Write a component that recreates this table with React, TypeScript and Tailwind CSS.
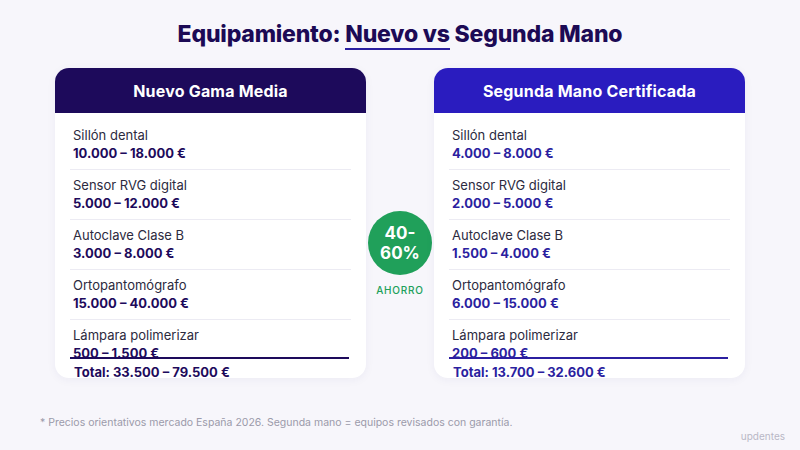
import React from 'react';

type Item = { name: string; price: string };

const nuevo: Item[] = [
  { name: 'Sillón dental', price: '10.000 – 18.000 €' },
  { name: 'Sensor RVG digital', price: '5.000 – 12.000 €' },
  { name: 'Autoclave Clase B', price: '3.000 – 8.000 €' },
  { name: 'Ortopantomógrafo', price: '15.000 – 40.000 €' },
  { name: 'Lámpara polimerizar', price: '500 – 1.500 €' },
];

const segunda: Item[] = [
  { name: 'Sillón dental', price: '4.000 – 8.000 €' },
  { name: 'Sensor RVG digital', price: '2.000 – 5.000 €' },
  { name: 'Autoclave Clase B', price: '1.500 – 4.000 €' },
  { name: 'Ortopantomógrafo', price: '6.000 – 15.000 €' },
  { name: 'Lámpara polimerizar', price: '200 – 600 €' },
];

function PriceCard({
  title,
  items,
  total,
  headerClass,
  priceClass,
  lineClass,
}: {
  title: string;
  items: Item[];
  total: string;
  headerClass: string;
  priceClass: string;
  lineClass: string;
}) {
  return (
    <div className="w-[311px] h-[310px] shrink-0 rounded-[14px] overflow-hidden bg-white shadow-[0_2px_10px_rgba(40,30,120,0.05)] flex flex-col">
      {/* Header */}
      <div className={`h-[45px] shrink-0 flex items-center justify-center text-white font-bold text-[16px] tracking-[0.2px] ${headerClass}`}>
        {title}
      </div>

      {/* Rows */}
      <div className="px-[15px] pt-[7px] flex flex-col">
        {items.map((it, i) => {
          const last = i === items.length - 1;
          return (
            <div
              key={it.name}
              className={`px-[3px] pt-[6px] ${last ? 'h-[37px]' : 'h-[50px] border-b border-[#ecebf3]'}`}
            >
              <div className="text-[13px] leading-[18px] text-[#2c2a3e]">{it.name}</div>
              <div className={`text-[13px] leading-[18px] font-bold ${priceClass}`}>{it.price}</div>
            </div>
          );
        })}
        <div className={`border-t-2 ${lineClass} pt-[5px] px-[4px] mr-[2px]`}>
          <div className={`text-[13px] leading-[16px] font-bold ${priceClass}`}>{total}</div>
        </div>
      </div>
    </div>
  );
}

export default function App() {
  return (
    <div
      className="w-[800px] h-[450px] bg-[#f7f6fb] relative overflow-hidden flex flex-col"
      style={{ fontFamily: 'Inter, "Noto Sans", sans-serif' }}
    >
      {/* Title */}
      <div className="pt-[18px] flex justify-center">
        <h1 className="text-[23px] leading-[32px] font-extrabold text-[#1c0a55] tracking-[-0.2px]">
          Equipamiento:{' '}
          <span className="relative">
            Nuevo vs
            <span className="absolute left-0 right-0 -bottom-[2px] h-[2px] bg-[#2a1fa0]" />
          </span>{' '}
          Segunda Mano
        </h1>
      </div>

      {/* Cards */}
      <div className="mt-[18px] px-[55px] flex">
        <PriceCard
          title="Nuevo Gama Media"
          items={nuevo}
          total="Total: 33.500 – 79.500 €"
          headerClass="bg-[#1d0a5b]"
          priceClass="text-[#1d0a5b]"
          lineClass="border-[#1d0a5b]"
        />

        <div className="flex-1 flex flex-col items-center pt-[143px]">
          <div className="w-[64px] h-[64px] rounded-full bg-[#20a05a] flex items-center justify-center">
            <span className="text-white font-bold text-[17px] leading-[20px] text-center">
              40-
              <br />
              60%
            </span>
          </div>
          <div className="mt-[8px] text-[10px] font-medium tracking-[0.8px] text-[#20a05a]">AHORRO</div>
        </div>

        <PriceCard
          title="Segunda Mano Certificada"
          items={segunda}
          total="Total: 13.700 – 32.600 €"
          headerClass="bg-[#2a1cbf]"
          priceClass="text-[#2b1fa0]"
          lineClass="border-[#2b1fa0]"
        />
      </div>

      {/* Footnote */}
      <div className="mt-[37px] pl-[40px] text-[10.5px] text-[#9b9aaa]">
        * Precios orientativos mercado España 2026. Segunda mano = equipos revisados con garantía.
      </div>

      <div className="absolute right-[15px] bottom-[6px] text-[10px] text-[#b9b8c6]">updentes</div>
    </div>
  );
}
